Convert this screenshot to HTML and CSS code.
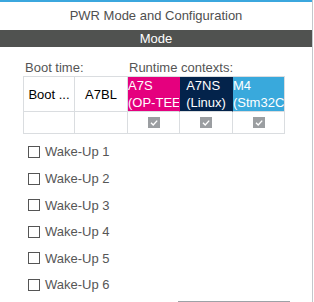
FILE: index.html
```html
<!DOCTYPE html>
<html>
<head>
<meta charset="utf-8">
<link rel="stylesheet" href="styles.css">
</head>
<body>
<div class="panel">
  <div class="topline"></div>
  <div class="title">PWR Mode and Configuration</div>
  <div class="section">Mode</div>
  <div class="content">
    <div class="labels">
      <span class="lbl boot">Boot time:</span>
      <span class="lbl rt">Runtime contexts:</span>
    </div>
    <div class="ctx-grid">
      <div class="cell plain">Boot ...</div>
      <div class="cell plain">A7BL</div>
      <div class="cell ctx a7s"><span class="ctx-text">A7S<br>(OP-TEE)</span></div>
      <div class="cell ctx a7ns"><span class="ctx-text">A7NS<br>(Linux)</span></div>
      <div class="cell ctx m4"><span class="ctx-text">M4<br>(Stm32Cube)</span></div>
      <div class="cell"></div>
      <div class="cell"></div>
      <div class="cell chk"><span class="gbox"><svg viewBox="0 0 12 11" width="12" height="11"><polyline points="3,5.8 5.2,8 9.2,3.6" fill="none" stroke="#fff" stroke-width="1.4"/></svg></span></div>
      <div class="cell chk"><span class="gbox"><svg viewBox="0 0 12 11" width="12" height="11"><polyline points="3,5.8 5.2,8 9.2,3.6" fill="none" stroke="#fff" stroke-width="1.4"/></svg></span></div>
      <div class="cell chk"><span class="gbox"><svg viewBox="0 0 12 11" width="12" height="11"><polyline points="3,5.8 5.2,8 9.2,3.6" fill="none" stroke="#fff" stroke-width="1.4"/></svg></span></div>
    </div>
    <ul class="wakeups">
      <li><span class="box"></span>Wake-Up 1</li>
      <li><span class="box"></span>Wake-Up 2</li>
      <li><span class="box"></span>Wake-Up 3</li>
      <li><span class="box"></span>Wake-Up 4</li>
      <li><span class="box"></span>Wake-Up 5</li>
      <li><span class="box"></span>Wake-Up 6</li>
    </ul>
    <div class="actions"><div class="btn"></div></div>
  </div>
</div>
</body>
</html>
```

FILE: styles.css
```css
html, body {
  margin: 0;
  padding: 0;
  overflow: hidden;
  background: #fff;
}
body {
  font-family: "Liberation Sans", Arial, sans-serif;
  font-size: 13px;
}
.panel {
  width: 312px;
  height: 302px;
  border-right: 1px solid #c3c7cb;
  overflow: hidden;
}
.topline {
  height: 2px;
  background: #3ba7de;
}
.title {
  height: 28px;
  line-height: 28px;
  text-align: center;
  color: #4f4f4f;
}
.section {
  height: 17px;
  line-height: 17px;
  background: #505250;
  color: #fff;
  text-align: center;
}
.content {
  padding-left: 23px;
}
.labels {
  display: flex;
  margin-top: 13px;
  height: 16px;
  line-height: 15px;
  color: #555;
}
.lbl {
  padding-left: 2px;
}
.boot {
  width: 102px;
}
.ctx-grid {
  display: grid;
  grid-template-columns: 51px 53px 52px 53px 52px;
  grid-template-rows: 35px 22px;
  width: max-content;
  border-top: 1px solid #dadde0;
  border-left: 1px solid #dadde0;
}
.cell {
  box-sizing: border-box;
  border-right: 1px solid #dadde0;
  border-bottom: 1px solid #dadde0;
  overflow: hidden;
}
.plain {
  display: flex;
  align-items: center;
  justify-content: center;
  color: #000;
  white-space: nowrap;
}
.ctx {
  color: #fff;
  text-align: center;
  line-height: 17px;
  white-space: nowrap;
}
.ctx-text {
  display: inline-block;
  text-align: left;
}
.a7s {
  background: #e5007e;
  border-right-color: #e5007e;
}
.a7ns {
  background: #03234b;
  border-right-color: #03234b;
}
.m4 {
  background: #39a9dc;
}
.chk {
  display: flex;
  align-items: center;
  justify-content: center;
}
.gbox {
  display: block;
  width: 12px;
  height: 11px;
  background: #9b9ea1;
}
.gbox svg {
  display: block;
}
.wakeups {
  list-style: none;
  margin: 0;
  padding: 4.7px 0 0 5px;
  color: #565656;
}
.wakeups li {
  height: 26.6px;
  display: flex;
  align-items: center;
  gap: 5px;
}
.box {
  box-sizing: border-box;
  width: 12px;
  height: 12px;
  border: 1px solid #555;
}
.actions {
  display: flex;
  justify-content: flex-end;
  padding-right: 22px;
  margin-top: 2.7px;
}
.btn {
  width: 112px;
  height: 20px;
  border-top: 2px solid #9da2a7;
}
```
